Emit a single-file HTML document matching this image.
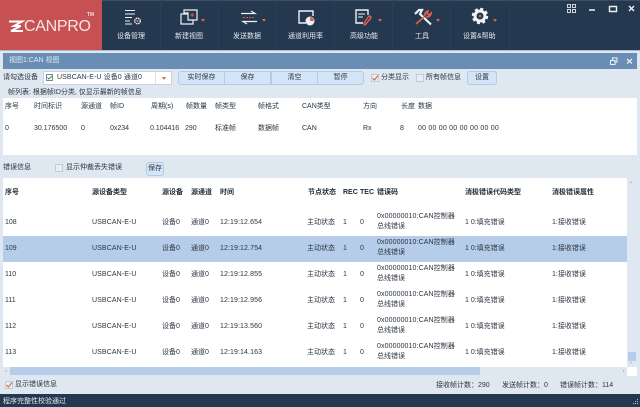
<!DOCTYPE html>
<html lang="zh"><head><meta charset="utf-8">
<style>
html,body{margin:0;padding:0;width:640px;height:407px;overflow:hidden;background:#dfe7f0}
body{position:relative;font-family:"Liberation Sans","Noto Sans CJK SC",sans-serif;font-size:7px;color:#2b3540}
.a{position:absolute}
.t{position:absolute;white-space:nowrap;line-height:10px}
.w{color:#e6eaef;font-size:7px}
.b{font-weight:bold;color:#232c35}
.h{letter-spacing:.1px}
.btn{position:absolute;top:71px;height:14px;background:#d3e6f9;border:1px solid #b7cbe0;box-sizing:border-box;text-align:center;line-height:12px}
.cb{position:absolute;width:6px;height:6px;background:#e9eef4;border:1px solid #c3ccd6}
.sep{position:absolute;top:0;width:1px;height:50px;background:#2b4058}
svg{position:absolute;overflow:visible}
.row{position:absolute;left:0;width:627px;height:26px}
.sel{background:#b6cdea}
</style></head><body>
<div class="a" style="left:0;top:0;width:640px;height:50px;background:#24384f"></div>
<div class="a" style="left:0;top:0;width:640px;height:1px;background:#3f4f62"></div>
<div class="a" style="left:0;top:0;width:102px;height:50px;background:#c65052"></div>
<div class="a" style="left:0;top:50px;width:640px;height:1px;background:#aab8c7"></div>
<svg style="left:8px;top:20px" width="18" height="13"><path d="M1 1.500H14L6 6H13M12 6.500L3 11H15" fill="none" stroke="#fff" stroke-width="2"/></svg>
<div class="t" style="left:24px;top:17px;font-size:16px;line-height:19px;color:#f6e6e6;letter-spacing:-.3px">CANPRO</div>
<div class="t" style="left:87px;top:12px;font-size:5px;line-height:6px;color:#f6dede;font-weight:bold">TM</div>
<div class="sep" style="left:160px"></div><div class="sep" style="left:218px"></div><div class="sep" style="left:276px"></div><div class="sep" style="left:334px"></div><div class="sep" style="left:392px"></div><div class="sep" style="left:450px"></div><div class="sep" style="left:509px"></div>

<svg style="left:124px;top:9px" width="18" height="17"><path d="M1 1.500H11M1 5H11M1 8.500H8M1 12H6M1 15H8" stroke="#eef2f6" stroke-width="1.100" fill="none"/><circle cx="13.500" cy="12" r="2.800" fill="none" stroke="#eef2f6" stroke-width="1.400" stroke-dasharray="1.500 .7"/><circle cx="13.500" cy="12" r="1.200" fill="#e2604c"/></svg>
<div class="t w" style="left:117px;top:32px">设备管理</div>

<svg style="left:179px;top:9px" width="20" height="17"><path d="M2 5H14V15H2Z" fill="#24384f" stroke="#eef2f6" stroke-width="1.200"/><path d="M5 4V1H18V11H9V4Z" fill="#24384f" stroke="#eef2f6" stroke-width="1.200"/><path d="M11.500 6H15M13.200 4.300V7.700" stroke="#e2604c" stroke-width="1.100"/></svg>
<div class="a" style="left:201px;top:19px;border:2.500px solid transparent;border-top:3px solid #e2604c;border-bottom:0"></div>
<div class="t w" style="left:175px;top:32px">新建视图</div>

<svg style="left:240px;top:10px" width="18" height="15"><path d="M1 3.500H14M11 1L15 3.500H11M17 11.500H4M7 14L3 11.500H7" fill="none" stroke="#eef2f6" stroke-width="1.200"/><path d="M3 7.500H15" stroke="#e2604c" stroke-width="1" stroke-dasharray="2 1"/></svg>
<div class="a" style="left:262px;top:19px;border:2.500px solid transparent;border-top:3px solid #e2604c;border-bottom:0"></div>
<div class="t w" style="left:233px;top:32px">发送数据</div>

<svg style="left:298px;top:9px" width="18" height="17"><path d="M8 14H1V2H15V7" fill="none" stroke="#eef2f6" stroke-width="1.400"/><circle cx="12" cy="12" r="4.500" fill="#eef2f6"/><path d="M12 12V8A4 4 0 0 1 16 12Z" fill="#e2604c"/></svg>
<div class="t w" style="left:288px;top:32px">通道利用率</div>

<svg style="left:355px;top:9px" width="18" height="17"><path d="M8 14H1V1H13V6" fill="none" stroke="#eef2f6" stroke-width="1.400"/><path d="M3 5H10M3 8H8" stroke="#eef2f6" stroke-width="1.100"/><path d="M9 14L14 7M10 16L16 9M9 14Q9 16 10 16M14 7Q16 7 16 9" fill="none" stroke="#e2604c" stroke-width="1.400"/></svg>
<div class="a" style="left:378px;top:19px;border:2.500px solid transparent;border-top:3px solid #e2604c;border-bottom:0"></div>
<div class="t w" style="left:350px;top:32px">高级功能</div>

<svg style="left:414px;top:9px" width="18" height="17"><path d="M1 5L5 1H8L6 5L17 15.500" fill="none" stroke="#eef2f6" stroke-width="2.200"/><path d="M2 15L10 8M11 7Q10 3 14 2L13 5L15 6L17 4Q17 8 12 8" fill="none" stroke="#e2604c" stroke-width="1.600"/></svg>
<div class="a" style="left:436px;top:19px;border:2.500px solid transparent;border-top:3px solid #e2604c;border-bottom:0"></div>
<div class="t w" style="left:415px;top:32px">工具</div>

<svg style="left:472px;top:8px" width="18" height="18"><circle cx="8" cy="8" r="5" fill="none" stroke="#f2f5f8" stroke-width="3"/><circle cx="8" cy="8" r="7" fill="none" stroke="#f2f5f8" stroke-width="2.400" stroke-dasharray="3 2.500"/><circle cx="8" cy="8" r="1.300" fill="#e2604c"/></svg>
<div class="a" style="left:493px;top:19px;border:2.500px solid transparent;border-top:3px solid #e2604c;border-bottom:0"></div>
<div class="t w" style="left:463px;top:32px">设置&amp;帮助</div>

<svg style="left:567px;top:4px" width="70" height="10"><path d="M.5.500H3.500V3.500H.5ZM5.500.500H8.500V3.500H5.500ZM.5 5.500H3.500V8.500H.5ZM5.500 5.500H8.500V8.500H5.500Z" fill="none" stroke="#cfd6de" stroke-width="1"/><path d="M22 6H28" stroke="#eef2f6" stroke-width="1.500"/><path d="M42.500 2.500H49.500V7.500H42.500Z" fill="none" stroke="#eef2f6" stroke-width="1.400"/><path d="M62 2L67 7M67 2L62 7" stroke="#eef2f6" stroke-width="1.400"/></svg>

<div class="a" style="left:3px;top:53px;width:634px;height:16px;background:#6a8db6"></div>
<div class="t" style="left:9px;top:56px;color:#e3eaf2">视图1:CAN 视图</div>
<svg style="left:610px;top:57px" width="24" height="9"><path d="M2.500 3V1H7V5H5.500M.5 3.500H5V7.500H.5Z" fill="none" stroke="#eef2f6"/><path d="M17 2L22 6.500M22 2L17 6.500" stroke="#eef2f6" stroke-width="1.200"/></svg>

<div class="t" style="left:3px;top:73px">请勾选设备</div>
<div class="a" style="left:43px;top:71px;width:129px;height:14px;background:#fff;border:1px solid #c8d2dd;box-sizing:border-box"></div>
<div class="a" style="left:155px;top:72px;width:1px;height:12px;background:#dde3ea"></div>
<div class="a" style="left:162px;top:77px;border:2px solid transparent;border-top:3px solid #e2604c;border-bottom:0"></div>
<div class="a" style="left:46px;top:74px;width:5px;height:5px;border:1px solid #7d8894;background:#fff"></div>
<svg style="left:46px;top:74px" width="8" height="8"><path d="M1.500 3.500L3 5L6 2" fill="none" stroke="#3f9a4a" stroke-width="1.100"/></svg>
<div class="t h" style="left:57px;top:73px">USBCAN-E-U 设备0 通道0</div>
<div class="btn" style="left:178px;width:47px;border-radius:3px 0 0 3px">实时保存</div>
<div class="btn" style="left:224px;width:47px">保存</div>
<div class="btn" style="left:271px;width:47px">清空</div>
<div class="btn" style="left:317px;width:47px;border-radius:0 3px 3px 0">暂停</div>
<div class="cb" style="left:371px;top:74px"></div>
<svg style="left:371px;top:74px" width="9" height="9"><path d="M1.500 4L3.500 6L7 1.500" fill="none" stroke="#e2604c" stroke-width="1.100"/></svg>
<div class="t" style="left:381px;top:73px">分类显示</div>
<div class="cb" style="left:416px;top:74px"></div>
<div class="t" style="left:426px;top:73px">所有帧信息</div>
<div class="btn" style="left:467px;width:30px;border-radius:3px">设置</div>

<div class="t" style="left:8px;top:88px">帧列表: 根据帧ID分类, 仅显示最新的帧信息</div>

<div class="a" style="left:3px;top:98px;width:634px;height:57px;background:#fff"></div>
<div class="t" style="left:5px;top:102px">序号</div><div class="t" style="left:34px;top:102px">时间标识</div><div class="t" style="left:81px;top:102px">源通道</div><div class="t" style="left:110px;top:102px">帧ID</div><div class="t" style="left:151px;top:102px">周期(s)</div><div class="t" style="left:186px;top:102px">帧数量</div><div class="t" style="left:215px;top:102px">帧类型</div><div class="t" style="left:258px;top:102px">帧格式</div><div class="t" style="left:302px;top:102px">CAN类型</div><div class="t" style="left:363px;top:102px">方向</div><div class="t" style="left:401px;top:102px">长度</div><div class="t" style="left:418px;top:102px">数据</div>
<div class="t" style="left:5px;top:124px">0</div><div class="t" style="left:34px;top:124px">30.176500</div><div class="t" style="left:81px;top:124px">0</div><div class="t" style="left:110px;top:124px">0x234</div><div class="t" style="left:150px;top:124px">0.104416</div><div class="t" style="left:185px;top:124px">290</div><div class="t" style="left:215px;top:124px">标准帧</div><div class="t" style="left:258px;top:124px">数据帧</div><div class="t" style="left:302px;top:124px">CAN</div><div class="t" style="left:363px;top:124px">Rx</div><div class="t" style="left:400px;top:124px">8</div><div class="t" style="left:418px;top:124px;letter-spacing:.22px">00 00 00 00 00 00 00 00</div>

<div class="t" style="left:3px;top:163px">错误信息</div>
<div class="cb" style="left:55px;top:164px"></div>
<div class="t" style="left:66px;top:163px">显示仲裁丢失错误</div>
<div class="btn" style="left:146px;top:162px;width:18px;border-radius:3px">保存</div>

<div class="a" style="left:3px;top:178px;width:624px;height:189px;background:#fff"></div>
<div class="a sel" style="left:3px;top:236px;width:624px;height:26px"></div>

<div class="t b" style="left:5px;top:188px">序号</div><div class="t b" style="left:92px;top:188px">源设备类型</div><div class="t b" style="left:162px;top:188px">源设备</div><div class="t b" style="left:191px;top:188px">源通道</div><div class="t b" style="left:220px;top:188px">时间</div><div class="t b" style="left:308px;top:188px">节点状态</div><div class="t b" style="left:343px;top:188px">REC</div><div class="t b" style="left:360px;top:188px">TEC</div><div class="t b" style="left:377px;top:188px">错误码</div><div class="t b" style="left:465px;top:188px">消极错误代码类型</div><div class="t b" style="left:552px;top:188px">消极错误属性</div>

<div class="row" style="top:209px"><div class="t" style="left:5px;top:9px">108</div><div class="t h" style="left:92px;top:9px">USBCAN-E-U</div><div class="t" style="left:162px;top:9px">设备0</div><div class="t" style="left:191px;top:9px">通道0</div><div class="t h" style="left:220px;top:9px">12:19:12.654</div><div class="t" style="left:307px;top:9px">主动状态</div><div class="t" style="left:343px;top:9px">1</div><div class="t" style="left:360px;top:9px">0</div><div class="t h" style="left:377px;top:3px">0x00000010:CAN控制器</div><div class="t" style="left:377px;top:13px">总线错误</div><div class="t" style="left:465px;top:9px">1 0:填充错误</div><div class="t" style="left:552px;top:9px">1:接收错误</div></div>
<div class="row" style="top:235px"><div class="t" style="left:5px;top:9px">109</div><div class="t h" style="left:92px;top:9px">USBCAN-E-U</div><div class="t" style="left:162px;top:9px">设备0</div><div class="t" style="left:191px;top:9px">通道0</div><div class="t h" style="left:220px;top:9px">12:19:12.754</div><div class="t" style="left:307px;top:9px">主动状态</div><div class="t" style="left:343px;top:9px">1</div><div class="t" style="left:360px;top:9px">0</div><div class="t h" style="left:377px;top:3px">0x00000010:CAN控制器</div><div class="t" style="left:377px;top:13px">总线错误</div><div class="t" style="left:465px;top:9px">1 0:填充错误</div><div class="t" style="left:552px;top:9px">1:接收错误</div></div>
<div class="row" style="top:261px"><div class="t" style="left:5px;top:9px">110</div><div class="t h" style="left:92px;top:9px">USBCAN-E-U</div><div class="t" style="left:162px;top:9px">设备0</div><div class="t" style="left:191px;top:9px">通道0</div><div class="t h" style="left:220px;top:9px">12:19:12.855</div><div class="t" style="left:307px;top:9px">主动状态</div><div class="t" style="left:343px;top:9px">1</div><div class="t" style="left:360px;top:9px">0</div><div class="t h" style="left:377px;top:3px">0x00000010:CAN控制器</div><div class="t" style="left:377px;top:13px">总线错误</div><div class="t" style="left:465px;top:9px">1 0:填充错误</div><div class="t" style="left:552px;top:9px">1:接收错误</div></div>
<div class="row" style="top:287px"><div class="t" style="left:5px;top:9px">111</div><div class="t h" style="left:92px;top:9px">USBCAN-E-U</div><div class="t" style="left:162px;top:9px">设备0</div><div class="t" style="left:191px;top:9px">通道0</div><div class="t h" style="left:220px;top:9px">12:19:12.956</div><div class="t" style="left:307px;top:9px">主动状态</div><div class="t" style="left:343px;top:9px">1</div><div class="t" style="left:360px;top:9px">0</div><div class="t h" style="left:377px;top:3px">0x00000010:CAN控制器</div><div class="t" style="left:377px;top:13px">总线错误</div><div class="t" style="left:465px;top:9px">1 0:填充错误</div><div class="t" style="left:552px;top:9px">1:接收错误</div></div>
<div class="row" style="top:313px"><div class="t" style="left:5px;top:9px">112</div><div class="t h" style="left:92px;top:9px">USBCAN-E-U</div><div class="t" style="left:162px;top:9px">设备0</div><div class="t" style="left:191px;top:9px">通道0</div><div class="t h" style="left:220px;top:9px">12:19:13.560</div><div class="t" style="left:307px;top:9px">主动状态</div><div class="t" style="left:343px;top:9px">1</div><div class="t" style="left:360px;top:9px">0</div><div class="t h" style="left:377px;top:3px">0x00000010:CAN控制器</div><div class="t" style="left:377px;top:13px">总线错误</div><div class="t" style="left:465px;top:9px">1 0:填充错误</div><div class="t" style="left:552px;top:9px">1:接收错误</div></div>
<div class="row" style="top:339px"><div class="t" style="left:5px;top:9px">113</div><div class="t h" style="left:92px;top:9px">USBCAN-E-U</div><div class="t" style="left:162px;top:9px">设备0</div><div class="t" style="left:191px;top:9px">通道0</div><div class="t h" style="left:220px;top:9px">12:19:14.163</div><div class="t" style="left:307px;top:9px">主动状态</div><div class="t" style="left:343px;top:9px">1</div><div class="t" style="left:360px;top:9px">0</div><div class="t h" style="left:377px;top:3px">0x00000010:CAN控制器</div><div class="t" style="left:377px;top:13px">总线错误</div><div class="t" style="left:465px;top:9px">1 0:填充错误</div><div class="t" style="left:552px;top:9px">1:接收错误</div></div>

<div class="a" style="left:628px;top:352px;width:8px;height:9px;background:#b6cdea"></div>
<div class="a" style="left:630px;top:181px;border:1.500px solid transparent;border-bottom:2px solid #a9b4c0;border-top:0"></div>
<div class="a" style="left:630px;top:362px;border:1.500px solid transparent;border-top:2px solid #a9b4c0;border-bottom:0"></div>
<div class="a" style="left:10px;top:367px;width:470px;height:8px;background:#b6cdea"></div>
<div class="a" style="left:5px;top:370px;border:1.500px solid transparent;border-right:2px solid #a9b4c0;border-left:0"></div>
<div class="a" style="left:623px;top:370px;border:1.500px solid transparent;border-left:2px solid #a9b4c0;border-right:0"></div>
<div class="a" style="left:627px;top:367px;width:10px;height:9px;background:#fff"></div>

<div class="cb" style="left:5px;top:381px"></div>
<svg style="left:5px;top:381px" width="9" height="9"><path d="M1.500 4L3.500 6L7 1.500" fill="none" stroke="#e2604c" stroke-width="1.100"/></svg>
<div class="t" style="left:15px;top:380px">显示错误信息</div>
<div class="t" style="left:436px;top:381px">接收帧计数：290</div>
<div class="t" style="left:502px;top:381px">发送帧计数：0</div>
<div class="t" style="left:560px;top:381px">错误帧计数：114</div>

<div class="a" style="left:0;top:394px;width:640px;height:13px;background:#24384f"></div>
<div class="t" style="left:3px;top:397px;color:#e6eaef">程序完整性校验通过</div>
<svg style="left:632px;top:399px" width="7" height="7"><path d="M5 0h1v1H5ZM3 2h1v1H3ZM5 2h1v1H5ZM1 4h1v1H1ZM3 4h1v1H3ZM5 4h1v1H5Z" fill="#b8c2cd"/></svg>
</body></html>
